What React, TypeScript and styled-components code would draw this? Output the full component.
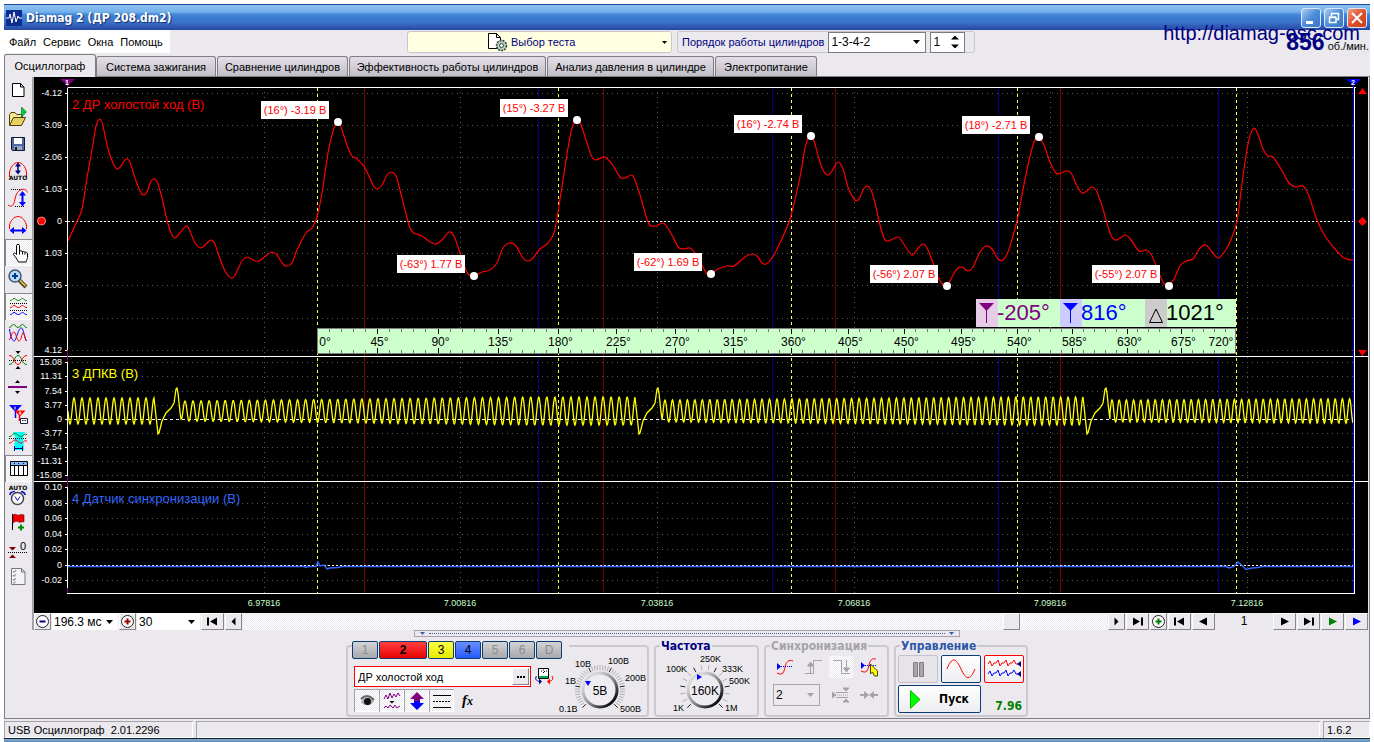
import React from "react";
import styled, { createGlobalStyle, css } from "styled-components";

const SANS = `"Liberation Sans", Arial, sans-serif`;
const FACE = "#ebe9ed";
const CHECKER = `repeating-conic-gradient(#ffffff 0 25%, #ebe9ed 0 50%) 0 0 / 2px 2px`;

const GlobalStyle = createGlobalStyle`
  * { box-sizing: border-box; }
  body {
    margin: 0;
    background: #fff;
    font: 11px/14px ${SANS};
    color: #000;
  }
  button, input, select { font: inherit; color: inherit; margin: 0; }
  svg { display: block; }
`;

/* ---------- window frame ---------- */

const Window = styled.main`
  position: relative;
  margin: 4px 4px 0;
  background: ${FACE};
`;

const TitleBar = styled.header`
  display: flex;
  align-items: center;
  gap: 4px;
  height: 26px;
  padding: 0 3px 0 2px;
  border-top: 1px solid #2248a0;
  background: linear-gradient(#8cc4f0 0, #74b0ea 7px, #4a8edc 9px, #3c80d4 11px, #3a74c8 17px, #2c52ae 23px, #2448a4 100%);
`;

const Title = styled.h1`
  flex: 1;
  margin: 0;
  color: #fff;
  font: bold 12px/18px "DejaVu Sans Condensed", "DejaVu Sans", sans-serif;
  text-shadow: 1px 1px 1px #16307a;
`;

const Caption = styled.button<{ $close?: boolean }>`
  width: 20px;
  height: 20px;
  padding: 0;
  margin-right: ${(p) => (p.$close ? 0 : -1)}px;
  border: 1px solid #dbe8fa;
  border-radius: 3px;
  background: ${(p) =>
    p.$close
      ? "linear-gradient(135deg, #f0a080, #e0522c 50%, #c83c18)"
      : "linear-gradient(135deg, #a8cdf2, #4c8cd8 50%, #3c78c8)"};
`;

const Watermark = styled.a`
  position: absolute;
  z-index: 2;
  top: 17px;
  right: 10px;
  color: #000080;
  font-size: 20px;
  line-height: 24px;
  text-decoration: none;
`;

const TopBar = styled.div`
  display: flex;
  align-items: flex-start;
  height: 23px;
`;

const Menu = styled.nav`
  display: flex;
  width: 166px;
  height: 23px;
  padding-left: 5px;
  gap: 7px;
  align-items: center;
  background: #fff;
`;

const MenuItem = styled.button`
  padding: 0;
  border: 0;
  background: none;
`;

const TestPicker = styled.button`
  display: flex;
  align-items: center;
  gap: 3px;
  width: 265px;
  height: 22px;
  margin: 1px 5px 0 237px;
  padding: 0 4px 0 80px;
  border: 1px solid #c8c6cc;
  border-radius: 3px;
  background: #ffffe1;
  color: #000080;
  span { flex: 1; text-align: left; }
`;

const OrderBox = styled.div`
  display: flex;
  align-items: center;
  gap: 4px;
  height: 22px;
  margin-top: 1px;
  padding: 0 9px 0 4px;
  border: 1px solid #c8c6cc;
  border-radius: 3px;
  color: #000080;
`;

const Field = styled.div<{ $w: number; $h?: number; $flat?: boolean; $muted?: boolean }>`
  position: relative;
  width: ${(p) => p.$w}px;
  height: ${(p) => p.$h ?? 21}px;
  border: ${(p) => (p.$flat ? "0" : p.$muted ? "1px solid #a8a6ac" : "1px solid #7c7a80")};
  background: ${(p) => (p.$muted ? FACE : "#fff")};
  color: #000;
  select, input {
    appearance: none;
    width: 100%;
    height: 100%;
    padding: 0 2px;
    border: 0;
    outline: 0;
    background: transparent;
    font-size: 12px;
  }
  svg {
    position: absolute;
    right: 5px;
    top: 50%;
    transform: translateY(-50%);
    pointer-events: none;
  }
`;

const Rpm = styled.output`
  display: flex;
  align-items: baseline;
  gap: 3px;
  margin-left: auto;
  padding-right: 1px;
  b { color: #000080; font-size: 23px; line-height: 24px; }
`;

/* ---------- tabs ---------- */

const Tabs = styled.div`
  display: flex;
  align-items: flex-end;
  gap: 1px;
  height: 24px;
  border-bottom: 1px solid #807e84;
`;

const Tab = styled.button<{ $w: number; $on?: boolean }>`
  width: ${(p) => p.$w}px;
  height: 20px;
  padding: 0;
  border: 1px solid #807e84;
  border-bottom: 0;
  border-radius: 3px 3px 0 0;
  background: linear-gradient(#e2dfe6, #c2bfc8);
  white-space: nowrap;
  ${(p) =>
    p.$on &&
    css`
      height: 23px;
      margin: 0 -1px -1px 0;
      background: ${FACE};
    `}
`;

const Panel = styled.div`
  display: flex;
  flex-direction: column;
  border: solid #807e84;
  border-width: 0 1px 1px;
`;

const Work = styled.div`
  display: flex;
  padding-right: 1px;
`;

const ToolColumn = styled.div`
  display: flex;
  flex-direction: column;
  width: 29px;
  border-right: 2px solid #a5a3a9;
`;

const Tool = styled.button<{ $on?: boolean }>`
  width: 27px;
  height: 27px;
  padding: 0;
  border: 0;
  background: none;
  ${(p) =>
    p.$on &&
    css`
      background: ${CHECKER};
      box-shadow: inset 1px 1px #8a888e, inset -1px -1px #fff;
    `}
`;

const Scope = styled.div`
  flex: 1;
  min-width: 0;
`;

const ChartSvg = styled.svg`
  width: 100%;
  height: auto;
  background: #000;
  font-family: ${SANS};
`;

/* ---------- navigation strip ---------- */

const NavRow = styled.div`
  display: flex;
  height: 17px;
  gap: 1px;
`;

const NavButton = styled.button<{ $w: number }>`
  display: grid;
  place-items: center;
  flex: none;
  width: ${(p) => p.$w}px;
  padding: 0;
  border: 1px solid;
  border-color: #fff #88868c #88868c #fff;
  background: ${FACE};
`;

const Track = styled.div`
  flex: 1;
  display: flex;
  justify-content: flex-end;
  padding-right: 87px;
  background: ${CHECKER};
`;

const PageNo = styled.output`
  width: 56px;
  text-align: center;
  font-size: 12px;
  line-height: 17px;
`;

const Splitter = styled.div`
  display: flex;
  align-items: center;
  justify-content: space-between;
  align-self: center;
  width: 546px;
  height: 7px;
  padding: 0 5px;
  border: 1px solid #a5a3a9;
  gap: 4px;
  &::before { content: ""; order: 1; flex: 1; border-top: 1px dotted #3a5ea8; }
  svg:last-child { order: 2; }
`;

/* ---------- bottom groups ---------- */

const Groups = styled.div`
  display: flex;
  justify-content: center;
  gap: 5px;
  padding: 8px 0 1px;
`;

const Group = styled.section<{ $w: number }>`
  width: ${(p) => p.$w}px;
  height: 72px;
  border: 2px solid #cbc9cf;
  border-radius: 4px;
`;

const GroupTitle = styled.h2<{ $color: string }>`
  width: max-content;
  margin: -8px 0 0 4px;
  padding: 0 1px;
  background: ${FACE};
  color: ${(p) => p.$color};
  font: bold 12px/14px "DejaVu Sans Condensed", "DejaVu Sans", sans-serif;
`;

const ChannelTabs = styled.div`
  display: flex;
  gap: 1px;
  width: max-content;
  margin: -6px 0 0 4px;
  padding-right: 7px;
  background: ${FACE};
`;

const ChannelTab = styled.button<{ $w: number; $bg: string; $dim?: boolean }>`
  width: ${(p) => p.$w}px;
  height: 18px;
  padding: 0;
  border: 1px solid #0c3c74;
  border-radius: 2px;
  background: ${(p) => p.$bg};
  color: ${(p) => (p.$dim ? "#8c8c8c" : "#000")};
  font-size: 12px;
  font-weight: ${(p) => (p.$w > 30 ? "bold" : "normal")};
`;

const ChannelBody = styled.div`
  display: flex;
`;

const ChannelLeft = styled.div`
  width: 207px;
  padding: 7px 0 0 6px;
`;

const Row = styled.div<{ $gap?: number; $mt?: number }>`
  display: flex;
  align-items: center;
  gap: ${(p) => p.$gap ?? 0}px;
  margin-top: ${(p) => p.$mt ?? 0}px;
`;

const NameBox = styled.div`
  display: flex;
  width: 177px;
  height: 21px;
  padding: 1px;
  border: 1px solid #f00;
  background: #fff;
  input { flex: 1; min-width: 0; padding: 0 2px; border: 0; outline: 0; background: none; }
`;

const Toggle = styled.button<{ $on?: boolean; $w?: number }>`
  display: grid;
  place-items: center;
  width: ${(p) => p.$w ?? 25}px;
  height: 23px;
  padding: 0;
  border: 0;
  background: ${(p) => (p.$on ? CHECKER : "none")};
  box-shadow: ${(p) => (p.$on ? "inset 1px 1px #a5a3a9, inset -1px -1px #fff" : "none")};
`;

const IconButton = styled.button<{ $on?: boolean }>`
  display: grid;
  place-items: center;
  width: 24px;
  height: 22px;
  padding: 0;
  border: 0;
  background: ${(p) => (p.$on ? CHECKER : "none")};
`;

const KnobWrap = styled.div`
  position: relative;
  svg { overflow: visible; font-family: ${SANS}; }
  input { position: absolute; inset: 0; width: 100%; height: 100%; margin: 0; opacity: 0; }
`;

const SyncGrid = styled.div`
  display: grid;
  grid-template-columns: repeat(4, 24px);
  justify-content: space-between;
  align-items: center;
  row-gap: 6px;
  padding: 3px 6px 0 7px;
`;

const ControlGrid = styled.div`
  display: grid;
  grid-template-columns: repeat(3, 40px);
  gap: 2px 3px;
  padding: 2px 0 0 2px;
`;

const BigButton = styled.button<{ $border: string; $wide?: boolean }>`
  display: flex;
  align-items: center;
  justify-content: center;
  gap: 18px;
  height: 28px;
  padding: 0;
  grid-column: ${(p) => (p.$wide ? "span 2" : "auto")};
  border: 1px solid ${(p) => p.$border};
  border-radius: 2px;
  background: ${(p) => (p.$border === "#c4c2c8" ? "#e6e4e8" : "linear-gradient(#ffffff, #eeedf0)")};
  font: bold 12px/14px "DejaVu Sans Condensed", "DejaVu Sans", sans-serif;
`;

const Rate = styled.output`
  align-self: end;
  padding: 0 2px 0 0;
  text-align: right;
  color: #008000;
  font: bold 12px/14px "DejaVu Sans Condensed", "DejaVu Sans", sans-serif;
`;

const StatusBar = styled.footer`
  display: flex;
  gap: 3px;
  padding-top: 2px;
  border-bottom: 1px solid #14202c;
`;

const StatusCell = styled.div<{ $w?: number }>`
  ${(p) => (p.$w ? `width: ${p.$w}px` : "flex: 1")};
  height: 17px;
  padding-left: 3px;
  border: solid #a5a3a9;
  border-width: 1px 0 0 1px;
  box-shadow: inset -1px -1px #fff;
  line-height: 16px;
  white-space: pre;
`;

const Desktop = styled.div`
  height: 3px;
  background: linear-gradient(#8ab0d0, #5a8ab8);
`;

/* ---------- small drawings ---------- */

const ArrowDown = ({ color = "#000" }: { color?: string }) => (
  <svg width="7" height="4" viewBox="0 0 7 4"><path d="M0 0H7L3.5 4Z" fill={color} /></svg>
);

const navGlyphs: Record<string, React.ReactNode> = {
  first: <path d="M1 1.5h2v8H1zM11 1.5v8L4 5.5Z" />,
  last: <path d="M10 1.5h2v8h-2zM2 1.5v8L9 5.5Z" />,
  prev: <path d="M8.5 1.5v8L4.5 5.5Z" />,
  next: <path d="M4.5 1.5v8L8.5 5.5Z" />,
  left: <path d="M10 1.5v8L2 5.5Z" />,
  right: <path d="M3 1.5v8L11 5.5Z" />,
};

const NavGlyph = ({ kind, color = "#000" }: { kind: string; color?: string }) => (
  <svg width="13" height="11" viewBox="0 0 13 11" fill={color}>{navGlyphs[kind]}</svg>
);

const CircleSign = ({ plus, color }: { plus?: boolean; color: string }) => (
  <svg width="15" height="15" viewBox="0 0 15 15">
    <circle cx="7.5" cy="7.5" r="6" fill="#fff" stroke="#222" />
    <path d={plus ? "M4.5 7.5h6M7.5 4.5v6" : "M4.5 7.5h6"} stroke={color} strokeWidth="2" />
  </svg>
);

const AutoText = ({ y }: { y: number }) => (
  <text x="13" y={y} textAnchor="middle" fontSize="6" fontWeight="bold" fill="#000" fontFamily="DejaVu Sans, sans-serif">AUTO</text>
);

const toolIcons: { name: string; on?: boolean; art: React.ReactNode }[] = [
  { name: "Новый", art: <path d="M7.5 6.5h8l3.5 3.5v9.500h-11.500zM15.500 6.500v3.500h3.500" fill="#fff" stroke="#000" /> },
  {
    name: "Открыть",
    art: (
      <g>
        <path d="M4.5 21.5V10.5l1.5-2h4l1.5 2h6v3" fill="#f4e890" stroke="#4a4010" />
        <path d="M4.5 21.5l4-8h12l-4 8Z" fill="#e8d060" stroke="#4a4010" />
        <path d="M16.5 3v10l5-5Z" fill="#0c3" stroke="#063" strokeWidth=".6" />
      </g>
    ),
  },
  {
    name: "Сохранить",
    art: (
      <g>
        <path d="M6.5 6.5h13v13h-12l-1-1Z" fill="#5068a8" stroke="#101830" />
        <path d="M9 7h8v6H9z" fill="#fff" />
        <path d="M9 15h8v4H9z" fill="#98a4b8" />
        <path d="M10 16h2v3h-2z" fill="#101830" />
      </g>
    ),
  },
  {
    name: "Авто усиление",
    art: (
      <g fill="none">
        <path d="M4.5 19v-4C5 9 9 4.5 13 4.5S21 9 21.5 15v4" stroke="#f00" />
        <path d="M13 6v8" stroke="#000080" strokeWidth="1.5" />
        <path d="M10 8.5l3-4 3 4zM10 12.5l3 4 3-4z" fill="#000080" />
        <AutoText y={22} />
      </g>
    ),
  },
  {
    name: "Амплитуда",
    art: (
      <g fill="none">
        <path d="M6 4.5h12M10 21.5h10" stroke="#000" strokeDasharray="1 1" />
        <path d="M3 20c4 3 6 0 7-6S14 5 17 4.5s4 0 5.5 3" stroke="#f00" />
        <path d="M17.5 9v10" stroke="#00f" strokeWidth="2" />
        <path d="M14 10.5l3.5-4.5 3.5 4.5zM14 17l3.5 4.5L21 17z" fill="#00f" />
      </g>
    ),
  },
  {
    name: "Длительность",
    art: (
      <g fill="none">
        <path d="M4.5 17v-3C5 9 9 4.5 13 4.5S21 9 21.5 14v3" stroke="#f00" />
        <path d="M7 18.5h12" stroke="#00f" strokeWidth="2" />
        <path d="M9 15v7l-4.5-3.5zM17 15v7l4.5-3.5z" fill="#00f" />
      </g>
    ),
  },
  {
    name: "Рука",
    on: true,
    art: (
      <path
        d="M11.5 15.5v-9c0-1.5 3-1.5 3 0v6c.5-1 2.5-1 3 .5.5-1 2.5-.5 2.5.7.5-1 2.5-.5 2.5 1v3.8c0 1.5-1 2-1.5 4.5h-7.5c-1.5-3-3-5-5-7.5 0-2 2-1.5 3 0ZM14.5 12.5v3M17.5 13v2.5M20 13.7v2"
        fill="#fff" stroke="#000"
      />
    ),
  },
  {
    name: "Масштаб",
    art: (
      <g>
        <path d="M14 14l7 7" stroke="#5a4818" strokeWidth="4" />
        <path d="M14.5 14l6 6" stroke="#e8c860" strokeWidth="1.5" />
        <circle cx="10" cy="10" r="6" fill="#b8dcf8" stroke="#405878" strokeWidth="1.5" />
        <path d="M7 10h6M10 7v6" stroke="#003890" strokeWidth="2" />
      </g>
    ),
  },
  {
    name: "Раздельно",
    on: true,
    art: (
      <g fill="none">
        <path d="M5 7.5c3 0 2-2 4-2s2 2 4.5 2 2-2 4-2 1 2 4.5 2" stroke="#080" />
        <path d="M5 14.5c3 0 2-2 4-2s2 2 4.5 2 2-2 4-2 1 2 4.5 2" stroke="#f00" />
        <path d="M5 21.5c3 0 2-2 4-2s2 2 4.5 2 2-2 4-2 1 2 4.5 2" stroke="#00f" />
        <path d="M5 10.5h18M5 17.5h18" stroke="#000" strokeDasharray="1 1" />
      </g>
    ),
  },
  {
    name: "Совместно",
    art: (
      <g fill="none">
        <path d="M4 7.5c3 0 2-3 4.5-3s2 3 4.5 3 2-3 4.5-3 1 3 4.5 3" stroke="#080" />
        <path d="M4.5 9c1 8 3 12 4.5 12s2-3 3.5-7 2-6 4-6 3 12 5.5 13" stroke="#00f" />
        <path d="M4 20c2-1 2-7 4.5-8s3 9 5.5 9 2.5-8 4-8 2 7 3.5 8" stroke="#f00" />
      </g>
    ),
  },
  {
    name: "Сжать",
    art: (
      <g fill="none">
        <path d="M4 17.5c6 0 5-9 9-9s3 9 9 9" stroke="#080" />
        <path d="M4 8.5c6 0 5 9 9 9s3-9 9-9" stroke="#f00" />
        <path d="M4 13.5h18" stroke="#000" strokeDasharray="1 1" />
        <path d="M10.5 4h5L13 7zM10.5 22h5L13 19z" fill="#000" />
      </g>
    ),
  },
  {
    name: "Разделитель",
    art: (
      <g>
        <path d="M3 13h19" stroke="#800080" strokeWidth="2" />
        <path d="M10 9h5l-2.5-3zM10 17h5l-2.5 3z" />
      </g>
    ),
  },
  {
    name: "Маркеры",
    art: (
      <g>
        <path d="M4 4h13l-6.5 7z" fill="#00f" />
        <path d="M10.5 10v7" stroke="#00f" strokeWidth="1.5" />
        <path d="M9.5 9.5h11L15 15.5z" fill="#f00" />
        <path d="M14.5 14v6" stroke="#f00" strokeWidth="1.5" />
        <path d="M10 5.5v3M14 11h1.5l-1 2h2" stroke="#fff" fill="none" />
        <path d="M15.5 17.5h7v5h-7z" fill="#fff" stroke="#224" />
        <path d="M17 19.5h1.5M19.5 19.5h1.5" stroke="#224" />
      </g>
    ),
  },
  {
    name: "Фрагмент",
    art: (
      <g fill="none">
        <path d="M8 4h12l-2 5 1 13H9l1-13z" fill="#0ff" />
        <path d="M4 8.5c4 0 3-3 6-3s3 3 6 3 2-3 6-2" stroke="#080" />
        <path d="M4 15c4 0 3-3 6-3s3 3 6 3 2-3 6-2" stroke="#f00" />
        <path d="M4 10.5h18" stroke="#000" strokeDasharray="1 1" />
        <path d="M9.5 20.5h8M9.5 18v5M17.5 18v5" stroke="#000080" />
      </g>
    ),
  },
  {
    name: "Таблица",
    on: true,
    art: (
      <g>
        <path d="M5.5 6.5h17v14h-17z" fill="#fff" stroke="#000" />
        <path d="M6 7h16v3H6z" fill="#80b8f0" />
        <path d="M6 10.5h16M9.5 10v10M13.5 10v10M18.5 10v10" stroke="#000" />
        <path d="M9.5 8v1M13.5 8v1M18.5 8v1" stroke="#003" />
      </g>
    ),
  },
  {
    name: "Авто измерение",
    art: (
      <g fill="none">
        <AutoText y={8} />
        <path d="M5 13c0-3 2-3 5-3.5M20 13c0-3-2-3-4-3.5" stroke="#00c" strokeWidth="1.5" />
        <circle cx="12.5" cy="16.5" r="6" stroke="#444" strokeWidth="1.5" fill="#fff" />
        <path d="M10 14.5l2.5 4 2.5-4" stroke="#00c" />
      </g>
    ),
  },
  {
    name: "Флаг",
    art: (
      <g>
        <path d="M7.5 5v16" stroke="#000" />
        <path d="M8 6c3-2 4 1 6 0s3-.5 5 0v7c-3-1-3 1-5 0s-4-1-6 1z" fill="#e00" stroke="#600" strokeWidth=".6" />
        <path d="M13 18.5h6M16 15.5v6" stroke="#080" strokeWidth="2" />
      </g>
    ),
  },
  {
    name: "Ноль",
    art: (
      <g>
        <path d="M4 11h7l-3.5 3.5zM4 22h7l-3.5-3.5z" fill="#800000" />
        <path d="M3 16.5h19" stroke="#000" strokeDasharray="1 1" />
        <text x="15" y="14" fontSize="11">0</text>
      </g>
    ),
  },
  {
    name: "Отчёт",
    art: (
      <g fill="none" stroke="#78767c">
        <path d="M6.5 5.5h10l3.5 3.5v12.5h-13.5zM16.5 5.5v3.5h3.5" fill="#f4f3f5" />
        <path d="M8 8l1 1.5 2-2.5M8 12l1 1.5 2-2.5M8 16l1 1.5 2-2.5M8 19.5l1 1 1.5-2" />
      </g>
    ),
  },
];

/* ---------- oscillogram ---------- */

const redPoints: [number, number][] = [
  [68, 241], [77, 221], [82, 209], [87, 178], [93, 144], [96, 126], [100, 119], [103, 126], [108, 149], [113, 163],
  [117, 169], [121, 166], [126, 159], [130, 162], [135, 178], [140, 191], [143, 195], [147, 192], [151, 181],
  [155, 179], [158, 184], [162, 198], [167, 220], [171, 233], [175, 238], [179, 234], [186, 226], [189, 229],
  [195, 243], [201, 248], [206, 244], [211, 240], [215, 244], [219, 256], [225, 271], [231, 278], [235, 275],
  [242, 261], [247, 257], [253, 260], [259, 261], [267, 255], [272, 252], [277, 255], [283, 264], [287, 266],
  [292, 263], [297, 250], [306, 233], [312, 228], [317, 217], [322, 193], [328, 153], [332, 135], [336, 123],
  [338, 122], [341, 127], [347, 145], [352, 156], [357, 159], [365, 168], [373, 185], [377, 189], [382, 185],
  [387, 175], [391, 172], [396, 176], [400, 190], [405, 210], [410, 228], [414, 233], [422, 236], [430, 242],
  [436, 244], [442, 240], [449, 232], [454, 236], [460, 253], [465, 268], [469, 275], [474, 276], [482, 272],
  [490, 270], [497, 263], [503, 248], [510, 243], [516, 246], [523, 258], [528, 261], [533, 258], [539, 250],
  [548, 243], [554, 233], [558, 212], [563, 180], [568, 148], [572, 128], [577, 120], [581, 125], [587, 143],
  [592, 157], [596, 160], [603, 157], [606, 158], [612, 164], [620, 177], [625, 178], [631, 175], [634, 178],
  [640, 195], [648, 222], [652, 226], [656, 226], [663, 223], [667, 227], [673, 237], [678, 247], [683, 249],
  [690, 248], [695, 253], [703, 267], [707, 274], [711, 274], [718, 269], [727, 266], [734, 266], [745, 257],
  [752, 254], [757, 256], [762, 263], [766, 264], [772, 258], [780, 243], [789, 222], [793, 208], [800, 177],
  [805, 148], [808, 139], [811, 136], [814, 141], [820, 162], [824, 172], [828, 175], [832, 171], [838, 162],
  [843, 169], [848, 187], [855, 200], [859, 199], [863, 190], [867, 186], [871, 190], [875, 203], [880, 225],
  [884, 238], [888, 241], [898, 237], [903, 243], [912, 255], [918, 248], [923, 244], [927, 248], [933, 263],
  [938, 277], [943, 285], [947, 286], [952, 277], [957, 269], [962, 267], [968, 271], [973, 267], [980, 252],
  [986, 246], [992, 249], [998, 259], [1003, 260], [1008, 252], [1013, 236], [1017, 221], [1022, 195],
  [1028, 165], [1034, 142], [1039, 137], [1044, 145], [1050, 162], [1056, 173], [1061, 173], [1066, 171],
  [1071, 173], [1077, 186], [1082, 193], [1087, 191], [1092, 187], [1097, 192], [1103, 209], [1110, 233],
  [1115, 240], [1120, 238], [1126, 235], [1131, 240], [1139, 251], [1146, 250], [1151, 254], [1157, 268],
  [1163, 282], [1168, 286], [1174, 279], [1180, 266], [1186, 261], [1193, 259], [1200, 248], [1206, 245],
  [1212, 252], [1218, 258], [1223, 254], [1230, 242], [1237, 221], [1242, 183], [1248, 144], [1253, 129],
  [1257, 132], [1263, 149], [1268, 156], [1273, 157], [1281, 169], [1289, 183], [1296, 187], [1303, 186],
  [1309, 196], [1317, 220], [1325, 236], [1335, 249], [1344, 258], [1353, 260],
];

/* Catmull-Rom spline through the samples */
const smooth = (pts: [number, number][]) =>
  pts.slice(0, -1).reduce((d, p, i) => {
    const a = pts[i - 1] ?? p;
    const b = pts[i + 1];
    const c = pts[i + 2] ?? b;
    const f = (n: number) => n.toFixed(1);
    return `${d}C${f(p[0] + (b[0] - a[0]) / 6)} ${f(p[1] + (b[1] - a[1]) / 6)} ${f(b[0] - (c[0] - p[0]) / 6)} ${f(b[1] - (c[1] - p[1]) / 6)} ${b[0]} ${b[1]}`;
  }, `M${pts[0][0]} ${pts[0][1]}`);

/* toothed-wheel signal: sine runs separated by the missing-tooth pulse */
const teeth = (from: number, to: number, peak: number, period: number, amps: [number, number]) => {
  const out: string[] = [];
  for (let x = from; x <= to; x += 0.5) {
    const t = Math.min(1, (x - from) / 350);
    const amp = amps[0] + (amps[1] - amps[0]) * t;
    out.push(`${x} ${(411 - amp * Math.cos((2 * Math.PI * (x - peak)) / period)).toFixed(1)}`);
  }
  return out.join("L");
};
const pulse = (x: number) =>
  [[0, 434], [1, 433], [4, 421], [8, 413], [13, 408], [16, 403], [18, 389], [19, 388], [20, 393], [22, 412], [23, 419]]
    .map(([dx, y]) => `${x + dx} ${y}`).join("L");
const yellowPath =
  "M" + [
    teeth(68, 154, 154, 8, [13, 13]), pulse(158),
    teeth(182, 635, 185, 8.04, [10, 14]), pulse(639),
    teeth(662, 1083, 665, 7.465, [11, 14]), pulse(1087),
    teeth(1110, 1353, 1112, 7.2, [11, 13]),
  ].join("L");

const bluePath =
  "M68 566.5H304L306 567.5L308 566.5H316L318 562L320 566L324 565L327 569L330 568L338 567.5L342 566.5" +
  "H1226L1229 568L1234 566.5L1238 562L1242 565.5L1246 569.5L1252 568L1258 567.5L1262 566.5H1353";

const ch2: [string, number][] = [["-4.12", 93], ["-3.09", 125], ["-2.06", 157], ["-1.03", 189], ["0", 221], ["1.03", 253], ["2.06", 285], ["3.09", 318], ["4.12", 350]];
const ch3: [string, number][] = [["15.08", 362], ["11.31", 376], ["7.54", 391], ["3.77", 405], ["0", 419], ["-3.77", 433], ["-7.54", 447], ["-11.31", 461], ["-15.08", 475]];
const ch4: [string, number][] = [["0.10", 487], ["0.08", 503], ["0.06", 518], ["0.04", 534], ["0.02", 549], ["0", 565], ["-0.02", 580]];
const times: [string, number][] = [["6.97816", 264], ["7.00816", 460], ["7.03816", 657], ["7.06816", 854], ["7.09816", 1050], ["7.12816", 1247]];
const callouts: [string, number, number, number, number][] = [
  ["(16°) -3.19 В", 261, 101, 338, 122], ["(15°) -3.27 В", 500, 99, 577, 120],
  ["(16°) -2.74 В", 734, 115, 811, 136], ["(18°) -2.71 В", 962, 116, 1039, 137],
  ["(-63°) 1.77 В", 397, 255, 474, 276], ["(-62°) 1.69 В", 634, 253, 711, 274],
  ["(-56°) 2.07 В", 870, 265, 947, 286], ["(-55°) 2.07 В", 1092, 265, 1169, 286],
];

const strokeMarks = [317, 558, 791, 1017, 1236];
const angleX = (deg: number) => {
  const i = Math.min(3, Math.floor(deg / 180));
  return Math.round(strokeMarks[i] + ((strokeMarks[i + 1] - strokeMarks[i]) * (deg - i * 180)) / 180) + 0.5;
};

const VLines = ({ xs, color, dash }: { xs: number[]; color: string; dash?: string }) => (
  <path d={xs.map((x) => `M${x + 0.5} 88V593`).join("")} stroke={color} strokeDasharray={dash} />
);

const Readout = ({ x, bg, color, value, delta }: { x: number; bg: string; color: string; value: string; delta?: boolean }) => (
  <g>
    <rect x={x} y="299" width="22" height="28" fill={bg} />
    {delta ? (
      <path d={`M${x + 11} 309L${x + 17.5} 322.5H${x + 4.5}Z`} fill="none" stroke={color} />
    ) : (
      <g>
        <path d={`M${x + 3} 303h15l-7.5 8z`} fill={color} />
        <path d={`M${x + 10.5} 308v15`} stroke={color} />
      </g>
    )}
    <text x={x + 21} y="320" fontSize="22" fill={color}>{value}</text>
  </g>
);

const Oscillogram = () => (
  <ChartSvg viewBox="34 77 1334 536" role="img" aria-label="Осциллограмма">
    <g stroke="#585858" strokeDasharray="1 4">
      {[...ch2, ...ch3, ...ch4].map(([, y]) => <path key={y} d={`M72 ${y + 0.5}H1353`} />)}
      {times.map(([, x]) => <path key={x} d={`M${x + 0.5} 92V593`} />)}
    </g>
    <VLines xs={[364, 1060]} color="#860000" />
    <VLines xs={[603, 835]} color="#6c0000" />
    <VLines xs={[538, 772, 998, 1218]} color="#000090" />
    <VLines xs={strokeMarks} color="#ffff40" dash="3 3" />
    <path d="M68 221.5H1353M68 565.5H1353" stroke="#fff" strokeDasharray="2 2" />
    <path d="M68 419.5H1353" stroke="#fff" strokeDasharray="3 3" />

    <path d={smooth(redPoints)} fill="none" stroke="#f00" strokeWidth="1.2" />
    <path d={yellowPath} fill="none" stroke="#ff0" strokeWidth="1.3" />
    <path d={bluePath} fill="none" stroke="#3366ff" strokeWidth="1.4" />

    <g fill="#fff">
      <path d="M67 87h1289v1H67zM34 356h1334v1H34zM34 481h1334v1H34zM67 593h1288v1H67zM67 87h1v506h-1zM1354 87h1v507h-1z" />
      {[...ch2, ...ch3, ...ch4].map(([t, y]) => (
        <g key={t + y}>
          <rect x="65" y={y} width="3" height="1" />
          <text x="62" y={y + 3} fontSize="9" textAnchor="end">{t}</text>
        </g>
      ))}
    </g>
    <g fill="#ccffcc" fontSize="9" textAnchor="middle">
      {times.map(([t, x]) => <text key={t} x={x} y="606">{t}</text>)}
    </g>
    <path d="M67.5 80V88M67.5 350V362M67.5 476V487M67.5 588V593" stroke="#800080" />
    <path d="M1353.5 85V593" stroke="#0000e0" />
    <path d="M60 79h15l-7.5 7z" fill="#800080" />
    <path d="M1346 79h15l-7.5 7z" fill="#0000f0" />
    <g fill="#fff" fontSize="7" fontWeight="bold" textAnchor="middle">
      <text x="67" y="85">1</text><text x="1353" y="85">2</text>
    </g>
    <g fill="#f00">
      <path d="M1358 94h9l-4.5-6zM1358 350h9l-4.5 6zM1362.5 217l4.5 4.5-4.5 4.5-4.5-4.5z" />
      <circle cx="41.5" cy="221" r="4" stroke="#f88" />
    </g>

    <text x="72" y="109" fontSize="13" fill="#f00">2 ДР холостой ход (В)</text>
    <text x="72" y="378" fontSize="13" fill="#ff0">3 ДПКВ (В)</text>
    <text x="72" y="503" fontSize="13" fill="#3366ff">4 Датчик синхронизации (В)</text>

    {callouts.map(([t, x, y, cx, cy]) => (
      <g key={t + x}>
        <rect x={x} y={y} width="68" height="18" fill="#fff" />
        <text x={x + 34} y={y + 13} fontSize="11" fill="#f00" textAnchor="middle">{t}</text>
        <circle cx={cx} cy={cy} r="4" fill="#fff" />
      </g>
    ))}

    <rect x="976" y="299" width="260" height="28" fill="#ccffcc" />
    <Readout x={976} bg="#e6cce6" color="#800080" value="-205°" />
    <Readout x={1060} bg="#ccccff" color="#0000ff" value="816°" />
    <Readout x={1145} bg="#cccccc" color="#000000" value="1021°" delta />

    <rect x="317.5" y="328.5" width="918" height="25" fill="#ccffcc" stroke="#808080" />
    {Array.from({ length: 79 }, (_, i) => (i + 1) * 9).map((d) => (
      <path
        key={d}
        d={d % 45 ? `M${angleX(d)} 329v3M${angleX(d)} 353v-3` : `M${angleX(d)} 329v5M${angleX(d)} 353v-5`}
        stroke={d % 45 ? "#707870" : "#000"}
      />
    ))}
    <g fontSize="12" fill="#000" textAnchor="middle">
      <text x="325" y="346">0°</text>
      {Array.from({ length: 15 }, (_, i) => (i + 1) * 45).map((d) => (
        <text key={d} x={angleX(d) + 2} y="346">{d}°</text>
      ))}
      <text x="1221" y="346">720°</text>
    </g>
  </ChartSvg>
);

/* ---------- rotary knobs ---------- */

const Knob = ({ id, value, pointer, labels, w, cx, cy, dense, label }: {
  id: string; value: string; pointer: string; labels: [string, number, number][];
  w: number; cx: number; cy: number; dense?: boolean; label: string;
}) => (
  <KnobWrap>
    <svg width={w} height="62" viewBox={`0 0 ${w} 62`}>
      <defs>
        <linearGradient id={id} x1="0" y1="0" x2="1" y2="1">
          <stop offset="0.2" stopColor="#d8d8d8" />
          <stop offset="0.55" stopColor="#888" />
          <stop offset="0.9" stopColor="#000" />
        </linearGradient>
      </defs>
      {Array.from({ length: dense ? 41 : 16 }, (_, i) => {
        const a = ((135 + (i * 270) / (dense ? 40 : 15)) * Math.PI) / 180;
        const major = i % (dense ? 8 : 3) === 0;
        return (
          <line
            key={i}
            x1={cx + 20 * Math.cos(a)} y1={cy + 20 * Math.sin(a)}
            x2={cx + 25 * Math.cos(a)} y2={cy + 25 * Math.sin(a)}
            stroke={major ? "#222" : "#b0aeb4"}
          />
        );
      })}
      <circle cx={cx} cy={cy} r="17" fill="#eeecf0" stroke={`url(#${id})`} strokeWidth="3" />
      <path d={pointer} fill="#00f" />
      <text x={cx} y={cy + 5} fontSize="12" textAnchor="middle">{value}</text>
      {labels.map(([t, x, y]) => <text key={t} x={x} y={y} fontSize="9">{t}</text>)}
    </svg>
    <input type="range" aria-label={label} />
  </KnobWrap>
);

const GREY = "linear-gradient(#d4d4d6, #a8a8ac)";
const channels: [string, number, string, boolean][] = [
  ["1", 26, GREY, true],
  ["2", 48, "linear-gradient(#ff4040, #e80000)", false],
  ["3", 26, "linear-gradient(#ffff40, #e8e800)", false],
  ["4", 26, "linear-gradient(#6a90ff, #2458ff)", false],
  ["5", 26, GREY, true],
  ["6", 26, GREY, true],
  ["D", 26, GREY, true],
];

const tabs: [string, number][] = [
  ["Система зажигания", 120],
  ["Сравнение цилиндров", 131],
  ["Эффективность работы цилиндров", 197],
  ["Анализ давления в цилиндре", 167],
  ["Электропитание", 102],
];

export default function App() {
  return (
    <>
      <GlobalStyle />
      <Window>
        <TitleBar>
          <svg width="16" height="16" viewBox="0 0 16 16">
            <rect width="16" height="16" fill="#0c2c90" />
            <path d="M0 8h3l1-4 2 9 2-11 2 10 2-6 1 2h3" fill="none" stroke="#fff" />
          </svg>
          <Title>Diamag 2 (ДР 208.dm2)</Title>
          <Caption aria-label="Свернуть">
            <svg width="18" height="18" viewBox="0 0 18 18"><path d="M4 12h7v3H4z" fill="#fff" /></svg>
          </Caption>
          <Caption aria-label="Восстановить">
            <svg width="18" height="18" viewBox="0 0 18 18">
              <path d="M6.5 7V4.5h7v6H11M4 8.5h7v5H4.5v-5M4 8h7" fill="none" stroke="#fff" strokeWidth="1.5" />
            </svg>
          </Caption>
          <Caption $close aria-label="Закрыть">
            <svg width="18" height="18" viewBox="0 0 18 18"><path d="M4 4l10 10M14 4L4 14" stroke="#fff" strokeWidth="2" /></svg>
          </Caption>
        </TitleBar>
        <Watermark href="http://diamag-osc.com">http://diamag-osc.com</Watermark>

        <TopBar>
          <Menu>
            {["Файл", "Сервис", "Окна", "Помощь"].map((m) => <MenuItem key={m}>{m}</MenuItem>)}
          </Menu>
          <TestPicker>
            <svg width="20" height="20" viewBox="0 0 20 20">
              <path d="M.5 1.5h8l4 4v11H.5zM8.5 1.5v4h4" fill="#fff" stroke="#000" />
              <circle cx="13.5" cy="13.5" r="5" fill="#b8d0bc" stroke="#304438" strokeWidth="1.5" strokeDasharray="2 1" />
              <circle cx="13.5" cy="13.5" r="2" fill="#fff" stroke="#304438" />
            </svg>
            <span>Выбор теста</span>
            <svg width="5" height="3" viewBox="0 0 5 3"><path d="M0 0H5L2.5 3Z" /></svg>
          </TestPicker>
          <OrderBox>
            <label htmlFor="order">Порядок работы цилиндров</label>
            <Field $w={98}>
              <select id="order"><option>1-3-4-2</option></select>
              <ArrowDown />
            </Field>
            <Field $w={35}>
              <input aria-label="Номер цилиндра" defaultValue="1" />
              <svg width="8" height="13" viewBox="0 0 8 13"><path d="M0 4h8L4 0zM0 9h8L4 13z" /></svg>
            </Field>
          </OrderBox>
          <Rpm><b>856</b>об./мин.</Rpm>
        </TopBar>

        <Tabs role="tablist">
          <Tab $on $w={92} role="tab">Осциллограф</Tab>
          {tabs.map(([t, w]) => <Tab key={t} $w={w} role="tab">{t}</Tab>)}
        </Tabs>

        <Panel>
          <Work>
            <ToolColumn>
              {toolIcons.map((t) => (
                <Tool key={t.name} $on={t.on} aria-label={t.name}>
                  <svg width="27" height="27" viewBox="0 0 27 27">{t.art}</svg>
                </Tool>
              ))}
            </ToolColumn>
            <Scope>
              <Oscillogram />
              <NavRow>
                <NavButton $w={17} aria-label="Уменьшить"><CircleSign color="#000080" /></NavButton>
                <Field $w={66} $h={17} $flat>
                  <select aria-label="Развёртка"><option>196.3 мс</option></select>
                  <ArrowDown />
                </Field>
                <NavButton $w={17} aria-label="Увеличить"><CircleSign plus color="#a00000" /></NavButton>
                <Field $w={63} $h={17} $flat>
                  <select aria-label="Масштаб"><option>30</option></select>
                  <ArrowDown />
                </Field>
                <NavButton $w={23} aria-label="В начало"><NavGlyph kind="first" /></NavButton>
                <NavButton $w={17} aria-label="Назад"><NavGlyph kind="prev" /></NavButton>
                <Track><NavButton $w={17} aria-label="Ползунок" /></Track>
                <NavButton $w={17} aria-label="Вперёд"><NavGlyph kind="next" /></NavButton>
                <NavButton $w={23} aria-label="В конец"><NavGlyph kind="last" /></NavButton>
                <NavButton $w={17} aria-label="Добавить"><CircleSign plus color="#008000" /></NavButton>
                <NavButton $w={23} aria-label="Первая"><NavGlyph kind="first" /></NavButton>
                <NavButton $w={23} aria-label="Предыдущая"><NavGlyph kind="left" /></NavButton>
                <PageNo>1</PageNo>
                <NavButton $w={23} aria-label="Следующая"><NavGlyph kind="right" /></NavButton>
                <NavButton $w={23} aria-label="Последняя"><NavGlyph kind="last" /></NavButton>
                <NavButton $w={23} aria-label="Просмотр"><NavGlyph kind="right" color="#008000" /></NavButton>
                <NavButton $w={23} aria-label="Воспроизвести"><NavGlyph kind="right" color="#0000ff" /></NavButton>
              </NavRow>
            </Scope>
          </Work>

          <Splitter>
            <svg width="5" height="3" viewBox="0 0 5 3"><path d="M0 0H5L2.5 3Z" fill="#3a5ea8" /></svg>
            <svg width="5" height="3" viewBox="0 0 5 3"><path d="M0 0H5L2.5 3Z" fill="#3a5ea8" /></svg>
          </Splitter>

          <Groups>
            <Group $w={303}>
              <ChannelTabs>
                {channels.map(([n, w, bg, dim]) => (
                  <ChannelTab key={n} $w={w} $bg={bg} $dim={dim}>{n}</ChannelTab>
                ))}
              </ChannelTabs>
              <ChannelBody>
                <ChannelLeft>
                  <Row $gap={4}>
                    <NameBox>
                      <input aria-label="Название канала" defaultValue="ДР холостой ход" />
                      <NavButton $w={17} aria-label="Выбрать">
                        <svg width="8" height="2" viewBox="0 0 8 2"><path d="M0 0h2v2H0zM3 0h2v2H3zM6 0h2v2H6z" /></svg>
                      </NavButton>
                    </NameBox>
                    <svg width="19" height="19" viewBox="0 0 19 19">
                      <path d="M3.5 1.5h10v10h-10z" fill="#fff" stroke="#000" />
                      <path d="M4 9h9v2H4z" fill="#0a4" />
                      <path d="M6 4h1M8 3h1M11 4h1M8 6l2-2" stroke="#000" />
                      <path d="M1.5 9c-2 3 0 5 3 5.5" fill="none" stroke="#000080" />
                      <path d="M4 11.5v6l3-3z" fill="#000080" />
                      <path d="M17 9c2 3 0 5-3 5.5" fill="none" stroke="#f00" />
                      <path d="M15 11.5v6l-3-3z" fill="#f00" />
                    </svg>
                  </Row>
                  <Row $mt={2}>
                    <Toggle $on aria-label="Показать">
                      <svg width="18" height="14" viewBox="0 0 18 14">
                        <path d="M3 8c3-6 10-6 13-1-3 5-9 6-13 1z" fill="#aaa" />
                        <path d="M3 5c4-4 9-4 13 1" fill="none" stroke="#666" strokeWidth="2" />
                        <circle cx="9.5" cy="7.5" r="3.5" fill="#111" />
                      </svg>
                    </Toggle>
                    <Toggle $on aria-label="Фильтр">
                      <svg width="18" height="18" viewBox="0 0 18 18" fill="none" stroke="#800080">
                        <path d="M1 7l2-4 2 4 2-6 2 5 2-4 2 3 2-4 2 3" />
                        <path d="M1 16l2-2 2 2 2-3 3 3 2-3 2 3 3-2" />
                        <path d="M6.5 9h5L9 11.5z" fill="#000" stroke="none" />
                      </svg>
                    </Toggle>
                    <Toggle $on aria-label="Инвертировать">
                      <svg width="18" height="18" viewBox="0 0 18 18">
                        <path d="M9 0l7 7h-4v2H6V7H2z" fill="#800080" />
                        <path d="M9 18l7-7h-4V9H6v2H2z" fill="#00f" />
                      </svg>
                    </Toggle>
                    <Toggle $on aria-label="Уровни">
                      <svg width="18" height="14" viewBox="0 0 18 14" stroke="#000">
                        <path d="M0 1.5h18M0 13.5h18" /><path d="M0 7.5h18" strokeDasharray="2 1" />
                      </svg>
                    </Toggle>
                    <Toggle aria-label="Функция">
                      <svg width="16" height="16" viewBox="0 0 16 16" fontFamily="Liberation Serif, serif" fontStyle="italic" fontWeight="bold">
                        <text x="3" y="12" fontSize="15">f</text><text x="8" y="12" fontSize="12">x</text>
                      </svg>
                    </Toggle>
                  </Row>
                </ChannelLeft>
                <Knob
                  id="volt" label="Диапазон напряжения" w={88} cx={45} cy={31} dense value="5В"
                  pointer="M30 22h6l-3 5z"
                  labels={[["10В", 20, 8], ["100В", 53, 5], ["1В", 10, 25], ["200В", 70, 22], ["0.1В", 4, 53], ["500В", 65, 53]]}
                />
              </ChannelBody>
            </Group>

            <Group $w={105} aria-labelledby="freq">
              <GroupTitle id="freq" $color="#000080">Частота</GroupTitle>
              <Knob
                id="hz" label="Частота" w={101} cx={49} cy={37} value="160K"
                pointer="M41 21v6l5-3z"
                labels={[["250K", 44, 9], ["100K", 10, 19], ["333K", 66, 19], ["500K", 73, 31], ["1K", 17, 58], ["1M", 69, 58]]}
              />
            </Group>

            <Group $w={125} aria-labelledby="sync">
              <GroupTitle id="sync" $color="#a5a3a9">Синхронизация</GroupTitle>
              <SyncGrid>
                <IconButton aria-label="Уровень">
                  <svg width="18" height="18" viewBox="0 0 18 18">
                    <path d="M1 15c6 3 7-1 8-6s4-8 8-6" fill="none" stroke="#f00" />
                    <path d="M1 8.5h16" stroke="#00f" strokeDasharray="1 1" /><path d="M1 5v7l4-3.5z" fill="#00f" />
                  </svg>
                </IconButton>
                <IconButton aria-label="Фронт">
                  <svg width="18" height="16" viewBox="0 0 18 16" fill="none" stroke="#a5a3a9">
                    <path d="M1 14.5h8.5V1.5H18M6.5 14V5" /><path d="M3.5 7h6l-3-4z" fill="#a5a3a9" />
                  </svg>
                </IconButton>
                <IconButton $on aria-label="Спад">
                  <svg width="18" height="16" viewBox="0 0 18 16" fill="none" stroke="#a5a3a9">
                    <path d="M1 1.5h8.5v13H18M14.5 1v9" /><path d="M11.5 9h6l-3 4z" fill="#a5a3a9" />
                  </svg>
                </IconButton>
                <IconButton aria-label="Указать уровень">
                  <svg width="19" height="20" viewBox="0 0 19 20">
                    <path d="M1 14c6 3 7-1 8-6s3-7 7-6" fill="none" stroke="#f00" />
                    <path d="M1 8.5h16" stroke="#00f" strokeDasharray="1 1" /><path d="M1 5v7l4-3.5z" fill="#00f" />
                    <path d="M10.5 7v10l2-2 2 4h3v-5z" fill="#ff0" stroke="#440" />
                  </svg>
                </IconButton>
                <Field $w={47} $h={22} $muted>
                  <select aria-label="Канал синхронизации"><option>2</option></select>
                  <ArrowDown color="#a5a3a9" />
                </Field>
                <span />
                <IconButton aria-label="Полоса">
                  <svg width="18" height="16" viewBox="0 0 18 16" fill="#a5a3a9" stroke="#a5a3a9">
                    <path d="M0 5v6l4-3z" /><path d="M11 1h6l-3 3zM11 15h6l-3-3z" />
                    <path d="M4 5.5h12M4 10.5h12" /><path d="M5 8h11" strokeDasharray="1 1" />
                  </svg>
                </IconButton>
                <IconButton aria-label="Центр">
                  <svg width="18" height="10" viewBox="0 0 18 10" fill="#a5a3a9">
                    <path d="M0 4h4V1l5 4-5 4V6H0zM18 4h-4V1l-5 4 5 4V6h4z" />
                  </svg>
                </IconButton>
              </SyncGrid>
            </Group>

            <Group $w={134} aria-labelledby="ctl">
              <GroupTitle id="ctl" $color="#2c58a8">Управление</GroupTitle>
              <ControlGrid>
                <BigButton $border="#c4c2c8" aria-label="Пауза">
                  <svg width="11" height="15" viewBox="0 0 11 15">
                    <path d="M.5.5h4v14h-4zM6.5.5h4v14h-4z" fill="#a8a6a8" stroke="#807e84" />
                  </svg>
                </BigButton>
                <BigButton $border="#0c3c74" aria-label="Осциллограмма">
                  <svg width="30" height="20" viewBox="0 0 30 20">
                    <path d="M1 10C6-3 10-1 15 10s9 12 14 0" fill="none" stroke="#f00" />
                  </svg>
                </BigButton>
                <BigButton $border="#f00" aria-label="Запись">
                  <svg width="33" height="20" viewBox="0 0 33 20" fill="none">
                    <path d="M0 5l2-3 2 5 2-3h2l2-3 2 6 2-3h2l2-3 2 6 2-3h2l2-3 2 4h2" stroke="#f00" />
                    <path d="M0 15l2-3 2 5 2-3h2l2-3 2 6 2-3h2l2-3 2 6 2-3h2l2-3 2 4h2" stroke="#00f" />
                    <path d="M33 2v6l-4-3zM33 12v6l-4-3z" fill="#000080" />
                  </svg>
                </BigButton>
                <BigButton $border="#0c3c74" $wide>
                  <svg width="11" height="19" viewBox="0 0 11 19"><path d="M.5.5v18L10 9.5z" fill="#0f0" stroke="#0b0" /></svg>
                  Пуск
                </BigButton>
                <Rate>7.96</Rate>
              </ControlGrid>
            </Group>
          </Groups>
        </Panel>

        <StatusBar>
          <StatusCell $w={189}>USB Осциллограф  2.01.2296</StatusCell>
          <StatusCell />
          <StatusCell $w={47}>1.6.2</StatusCell>
        </StatusBar>
        <Desktop />
      </Window>
    </>
  );
}
